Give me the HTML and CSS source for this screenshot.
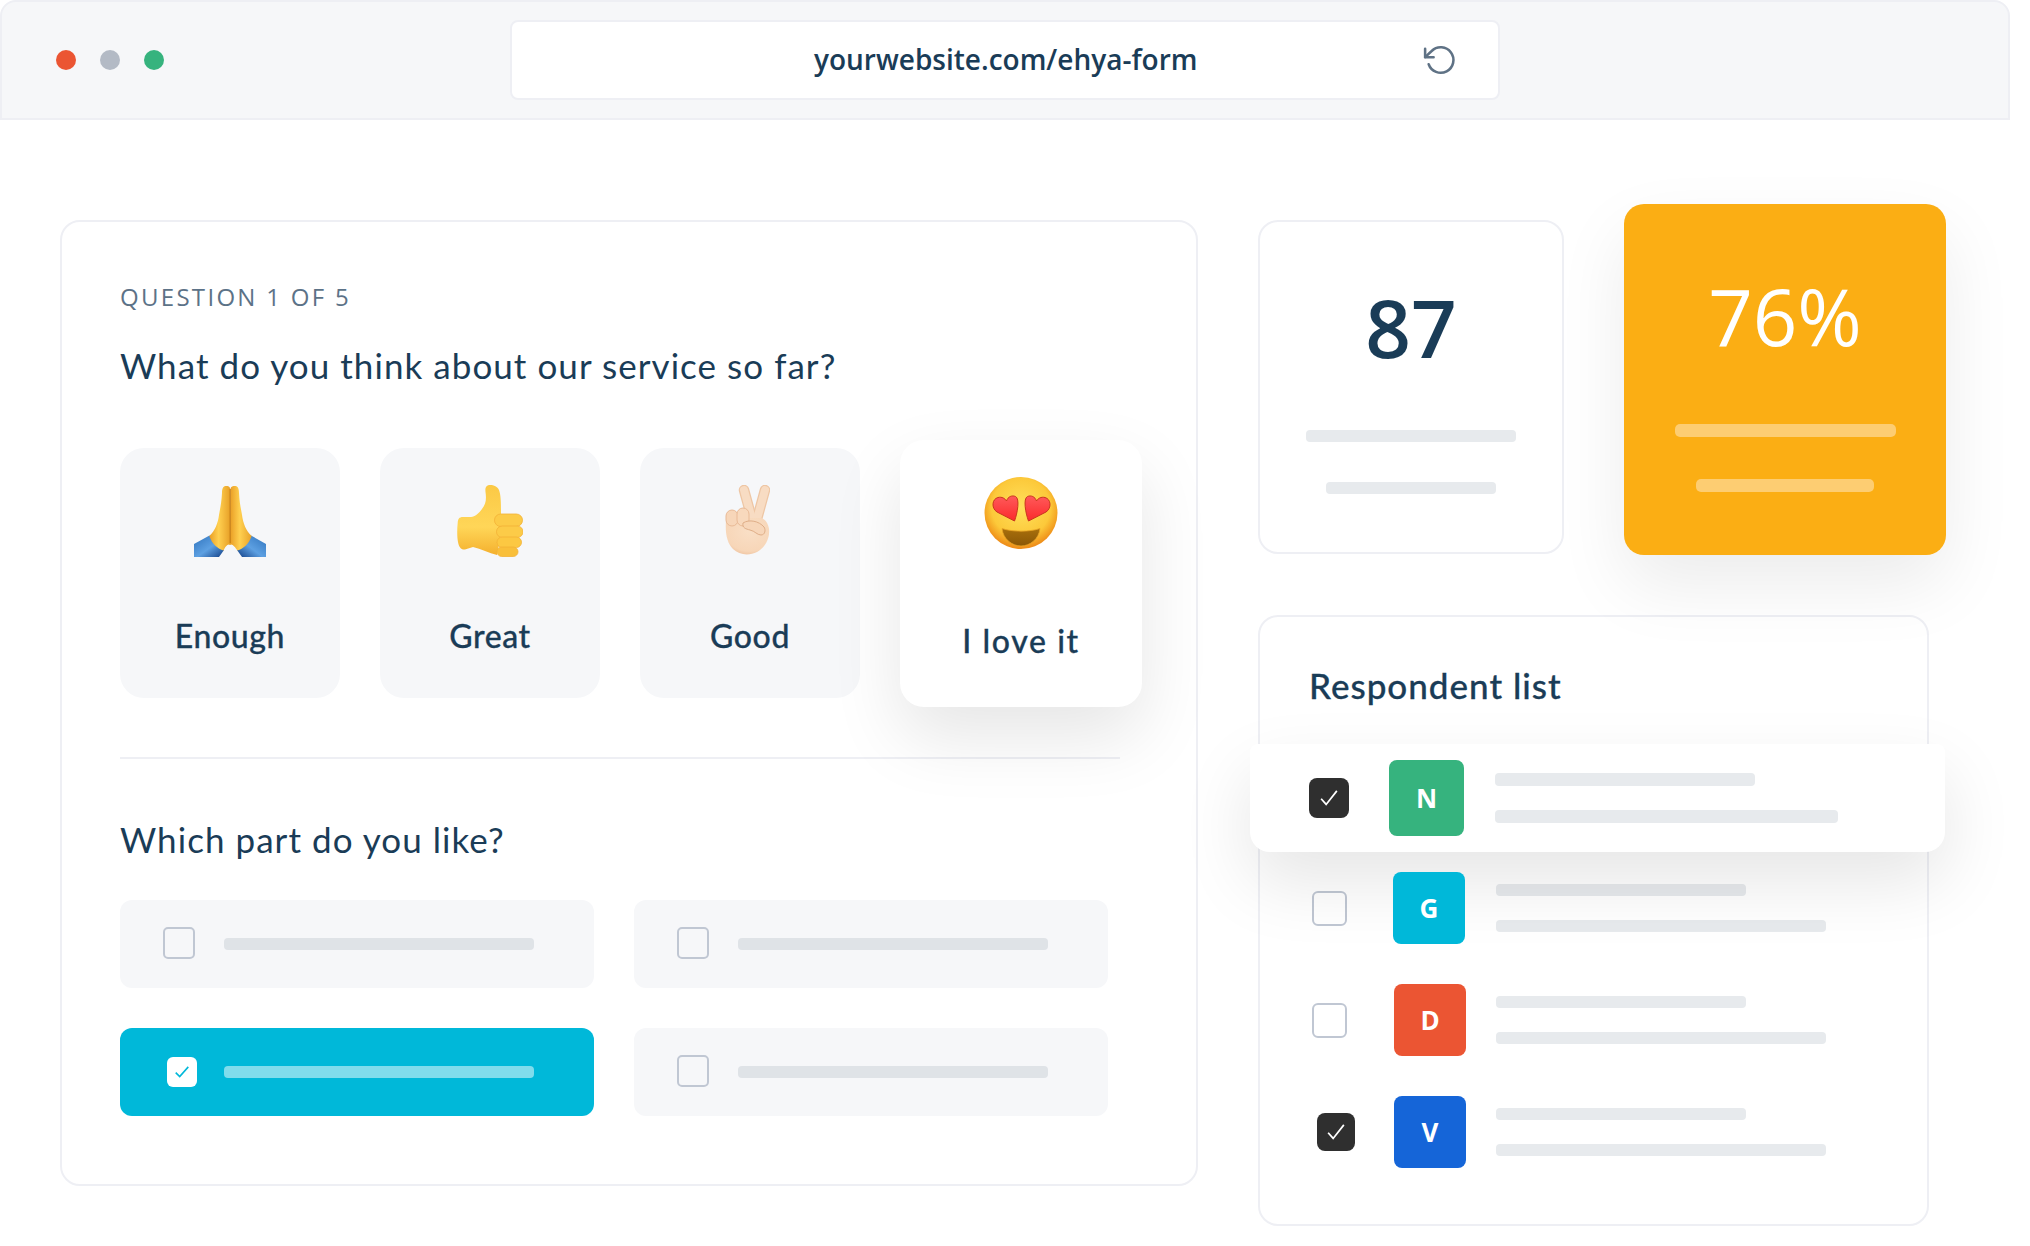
FILE: index.html
```html
<!DOCTYPE html>
<html lang="en">
<head>
<meta charset="utf-8">
<title>Ehya form</title>
<link rel="stylesheet" href="styles.css">
</head>
<body>
<div class="page">
  <header class="browser">
    <div class="dots"><span class="dot dot-red"></span><span class="dot dot-grey"></span><span class="dot dot-green"></span></div>
    <div class="address">
      <span class="url">yourwebsite.com/ehya-form</span>
      <svg class="reload" viewBox="0 0 24 24" fill="none" stroke="#5f7285" stroke-width="1.8" stroke-linecap="round" stroke-linejoin="round"><polyline points="1.5 4 1.5 10 7.5 10"/><path d="M4 15a9 9 0 1 0 2.13-9.36L1.5 10"/></svg>
    </div>
  </header>
  <main class="content">
    <section class="card form-card">
      <p class="eyebrow">QUESTION 1 OF 5</p>
      <h2 class="question">What do you think about our service so far?</h2>
      <div class="tiles">
        <div class="tile">
          <svg class="emoji emoji-pray" viewBox="0 0 72 72">
            <defs>
              <linearGradient id="sleeve" x1="0" y1="0" x2="1" y2="1"><stop offset="0" stop-color="#2f73bd"/><stop offset=".55" stop-color="#5da0e2"/><stop offset="1" stop-color="#123f86"/></linearGradient>
              <linearGradient id="sleeve2" x1="1" y1="0" x2="0" y2="1"><stop offset="0" stop-color="#2f73bd"/><stop offset=".55" stop-color="#5da0e2"/><stop offset="1" stop-color="#123f86"/></linearGradient>
              <linearGradient id="hand" x1="0" y1="0" x2="1" y2="0"><stop offset="0" stop-color="#e99d24"/><stop offset=".45" stop-color="#ffd050"/><stop offset="1" stop-color="#e8a128"/></linearGradient>
            </defs>
            <path d="M0 59 L15.5 50.5 L30 65 L25 72 H0Z" fill="url(#sleeve)"/>
            <path d="M72 59 L57 50.5 L43 65 L48 72 H72Z" fill="url(#sleeve2)"/>
            <path d="M36 60 C34 58 31 62 29.5 65.5 C24 64 18 59 15.3 51 C21 46 24 38 25 30 C26 24 27.5 18 28 8 C28 2 30 1 32 1 C34 1 36 1.500 36 3.500 Z" fill="url(#hand)"/>
            <path d="M36 60 C38 58 41 62 43.5 65.5 C49 64 55 59 57.700 51 C52 46 49 38 48 30 C47 24 45.500 18 45 8 C45 2 43 1 41 1 C39 1 37 1.500 36.500 3.500 Z" fill="url(#hand)"/>
            <path d="M36.200 4 V58" stroke="#c77f16" stroke-width="1.200"/>
          </svg>
          <span class="tile-label">Enough</span>
        </div>
        <div class="tile">
          <svg class="emoji emoji-thumb" viewBox="0 0 66 72">
            <defs>
              <linearGradient id="thumb" x1="0" y1="0" x2="0" y2="1"><stop offset="0" stop-color="#fbc945"/><stop offset=".6" stop-color="#ffd658"/><stop offset="1" stop-color="#f4b02e"/></linearGradient>
            </defs>
            <path d="M33 0 C29 0 28 3 28.500 7 C29.500 14 29 19 25 24 C22 28 18 32 14 32 L6 32 C2 32 1 34 .7 38 C0 44 0 52 1 57 C2 62 4 65 8 64.500 L16 62 C24 64 32 68 40 70 L44 50 L44 27 C44 20 44 10 42 5 C40.500 1.500 37 0 33 0Z" fill="url(#thumb)"/>
            <rect x="37.500" y="29" width="28" height="12.500" rx="6.200" fill="#fccb48" stroke="#f2b136" stroke-width=".8"/>
            <rect x="39.500" y="41" width="26.500" height="11.500" rx="5.700" fill="#fccb48" stroke="#f2b136" stroke-width=".8"/>
            <rect x="40" y="52" width="24.500" height="10.500" rx="5.200" fill="#fcc842" stroke="#f2b136" stroke-width=".8"/>
            <rect x="40" y="62" width="21" height="9.500" rx="4.700" fill="#f9bf3a" stroke="#f2b136" stroke-width=".8"/>
          </svg>
          <span class="tile-label">Great</span>
        </div>
        <div class="tile">
          <svg class="emoji emoji-peace" viewBox="0 0 45 70">
            <defs>
              <radialGradient id="skin" cx=".55" cy=".35" r=".75"><stop offset="0" stop-color="#f9dfc6"/><stop offset=".75" stop-color="#f7d6b8"/><stop offset="1" stop-color="#ebba94"/></radialGradient>
            </defs>
            <path d="M19 5 L27 34" stroke="#eec6a4" stroke-width="10.500" stroke-linecap="round"/>
            <path d="M40 5 L32 34" stroke="#eec6a4" stroke-width="10.500" stroke-linecap="round"/>
            <path d="M19 5 L27 34" stroke="#f8dcc3" stroke-width="8" stroke-linecap="round"/>
            <path d="M40 5 L32 34" stroke="#f8dcc3" stroke-width="8" stroke-linecap="round"/>
            <path d="M1 36 C0 48 2 58 8 64 C14 70 24 71 32 67 C41 62 45 52 44 44 C43 38 40 34 36 33 L16 33 Z" fill="url(#skin)"/>
            <rect x="1" y="25" width="12" height="16" rx="6" fill="#f7d6b9" stroke="#e9ba96"/>
            <rect x="12" y="23" width="12" height="18" rx="6" fill="#f8d9bd" stroke="#e9ba96"/>
            <path d="M18 38 C24 34 34 36 39 42 C41 45 40 50 36 50 C32 50 30 46 25 45 C21 44 17 43 18 38Z" fill="#f7d6b9" stroke="#dfae88" stroke-width="1"/>
          </svg>
          <span class="tile-label">Good</span>
        </div>
        <div class="tile tile-active">
          <svg class="emoji emoji-love" viewBox="0 0 74 72">
            <defs>
              <radialGradient id="face" cx=".5" cy=".42" r=".56"><stop offset="0" stop-color="#ffe05c"/><stop offset=".72" stop-color="#fcc93a"/><stop offset=".94" stop-color="#f29c1f"/><stop offset="1" stop-color="#ee8f1b"/></radialGradient>
              <linearGradient id="heart" x1="0" y1="0" x2="0" y2="1"><stop offset="0" stop-color="#ff5a5a"/><stop offset="1" stop-color="#fb2a2c"/></linearGradient>
              <linearGradient id="mouth" x1="0" y1="0" x2="0" y2="1"><stop offset="0" stop-color="#a86f0c"/><stop offset="1" stop-color="#8a5706"/></linearGradient>
            </defs>
            <ellipse cx="37" cy="36" rx="36.500" ry="36" fill="url(#face)"/>
            <path d="M18 51.500 C28 55 46 55 56 51.500 C55 62 46 69 37 69 C28 69 19 62 18 51.500Z" fill="url(#mouth)" stroke="#e8a325" stroke-width=".8"/>
            <path d="M30.500 44 L13 35 C7 31 8 22 14 20.500 C18 19.500 21 21.500 22.500 24 C24 19.500 28 18 31.500 19.500 C36 21.500 33.500 36 30.500 44Z" fill="url(#heart)" stroke="#c9351e" stroke-width="1"/>
            <path d="M44.500 44 L62 35 C68 31 67 22 61 20.500 C57 19.500 54 21.500 52.500 24 C51 19.500 47 18 43.500 19.500 C39 21.500 41.500 36 44.500 44Z" fill="url(#heart)" stroke="#c9351e" stroke-width="1"/>
          </svg>
          <span class="tile-label">I love it</span>
        </div>
      </div>
      <hr class="divider">
      <h2 class="question question-two">Which part do you like?</h2>
      <div class="options">
        <div class="option"><span class="box"></span><span class="option-bar"></span></div>
        <div class="option"><span class="box"></span><span class="option-bar"></span></div>
        <div class="option option-on">
          <span class="box box-on"><svg viewBox="0 0 14 14" fill="none" stroke="#00b8d9" stroke-width="1.400"><path d="M1.500 7.500 L5 11 L12.500 2.500"/></svg></span>
          <span class="option-bar"></span>
        </div>
        <div class="option"><span class="box"></span><span class="option-bar"></span></div>
      </div>
    </section>
    <aside class="side">
      <div class="stats">
        <div class="card stat">
          <div class="stat-value">87</div>
          <span class="stat-bar stat-bar-a"></span>
          <span class="stat-bar stat-bar-b"></span>
        </div>
        <div class="stat-gold">
          <div class="gold-value">76%</div>
          <span class="gold-bar gold-bar-a"></span>
          <span class="gold-bar gold-bar-b"></span>
        </div>
      </div>
      <section class="card list-card">
        <h3 class="list-title">Respondent list</h3>
        <div class="person person-top">
          <span class="tick tick-top"><svg viewBox="0 0 14 14" fill="none" stroke="#fff" stroke-width="1.200"><path d="M1.500 7.500 L5 11.500 L12.500 2"/></svg></span>
          <span class="avatar avatar-top avatar-n">N</span>
          <div class="lines lines-top"><span class="line line-a"></span><span class="line line-b"></span></div>
        </div>
        <div class="person">
          <span class="box list-box"></span>
          <span class="avatar avatar-g">G</span>
          <div class="lines"><span class="line line-a"></span><span class="line line-b"></span></div>
        </div>
        <div class="person">
          <span class="box list-box"></span>
          <span class="avatar avatar-d">D</span>
          <div class="lines lines-tight"><span class="line line-a"></span><span class="line line-b"></span></div>
        </div>
        <div class="person">
          <span class="tick tick-last"><svg viewBox="0 0 14 14" fill="none" stroke="#fff" stroke-width="1.200"><path d="M1.500 7.500 L5 11.500 L12.500 2"/></svg></span>
          <span class="avatar avatar-v">V</span>
          <div class="lines lines-tight"><span class="line line-a"></span><span class="line line-b"></span></div>
        </div>
      </section>
    </aside>
  </main>
</div>
</body>
</html>
```
FILE: styles.css
```css
* { box-sizing: border-box; }
html, body { margin: 0; padding: 0; background: #fff; }
.page { width: 2030px; height: 1246px; overflow: hidden; background: #fff; color: #1a3c57; font-family: "Lato", "Open Sans", sans-serif; }

.browser { width: 2010px; height: 120px; display: flex; align-items: center; padding-left: 54px; background: #f6f7f9; border: 2px solid #eeeff4; border-radius: 16px 16px 0 0; }
.dots { display: flex; gap: 24px; width: 454px; flex: none; }
.dot { width: 20px; height: 20px; border-radius: 50%; }
.dot-red { background: #eb5533; }
.dot-grey { background: #b3bac5; }
.dot-green { background: #36b37e; }
.address { width: 990px; height: 80px; flex: none; display: flex; align-items: center; padding-left: 302px; background: #fff; border: 2px solid #eeeff4; border-radius: 8px; }
.url { font-family: "Open Sans", sans-serif; font-size: 28px; font-weight: 600; white-space: nowrap; width: 609px; margin-top: -2px; }
.reload { width: 34px; height: 34px; flex: none; }

.content { display: flex; align-items: flex-start; padding: 84px 0 0 60px; }
.card { background: #fff; border: 2px solid #eeeff4; border-radius: 20px; }
.form-card { width: 1138px; height: 966px; margin-top: 16px; padding: 59px 0 0 58px; }
.eyebrow { margin: 0; font-family: "Open Sans", sans-serif; font-size: 24px; line-height: 32px; font-weight: 500; letter-spacing: 2.3px; color: #5c7287; }
.question { margin: 30px 0 0; font-size: 35px; font-weight: 400; line-height: 44px; letter-spacing: 1.05px; color: #1a3c57; }
.tiles { display: flex; margin-top: 61px; align-items: flex-start; }
.tile { width: 220px; height: 250px; margin-right: 40px; flex: none; display: flex; flex-direction: column; align-items: center; background: #f6f7f9; border-radius: 24px; padding-top: 37px; }
.emoji { display: block; flex: none; height: 72px; width: 72px; }
.emoji-thumb { width: 66px; }
.emoji-peace { width: 45px; height: 70px; margin: 0 5px 2px 0; }
.emoji-love { width: 74px; }
.tile-label { margin-top: 57px; font-size: 32px; line-height: 44px; font-weight: 500; letter-spacing: .6px; -webkit-text-stroke: .3px #1a3c57; }
.tile-active { width: 242px; height: 267px; margin: -8px 0 0 0; background: #fff; box-shadow: 0 30px 70px rgba(0, 0, 0, .1); }
.tile-active .tile-label { margin-top: 70px; letter-spacing: 1.6px; }
.divider { width: 1000px; height: 2px; margin: 50px 0 0; border: 0; background: #eeeff4; }
.question-two { margin-top: 58px; }
.options { display: grid; grid-template-columns: 474px 474px; column-gap: 40px; row-gap: 40px; margin-top: 39px; }
.option { height: 88px; display: flex; align-items: center; background: #f6f7f9; border-radius: 12px; padding-left: 43px; }
.box { display: block; flex: none; width: 32px; height: 32px; border: 2px solid #c0c7d3; border-radius: 5px; margin-top: -2px; }
.option-bar { display: block; width: 310px; height: 12px; margin-left: 29px; background: #dfe3e7; border-radius: 4px; }
.option-on { background: #00b8d9; }
.option-on .option-bar { margin-left: 27px; background: #80dcec; }
.box-on { width: 30px; height: 30px; margin: 0 0 0 4px; border: 0; background: #fff; border-radius: 6px; display: flex; align-items: center; justify-content: center; }
.box-on svg { width: 16px; height: 16px; }

.side { margin-left: 60px; flex: none; width: 688px; }
.stats { display: flex; align-items: flex-start; }
.stat { width: 306px; height: 334px; margin-top: 16px; display: flex; flex-direction: column; align-items: center; padding-top: 55px; }
.stat-value { font-family: "Open Sans", sans-serif; font-size: 80px; line-height: 100px; font-weight: 600; color: #1a3c57; }
.stat-bar { display: block; height: 12px; background: #e7eaed; border-radius: 4px; }
.stat-bar-a { width: 210px; margin-top: 53px; }
.stat-bar-b { width: 170px; margin-top: 40px; }
.stat-gold { width: 322px; height: 351px; margin-left: 60px; display: flex; flex-direction: column; align-items: center; padding-top: 62px; background: #fbae14; border-radius: 20px; box-shadow: 0 30px 70px rgba(0, 0, 0, .08); }
.gold-value { font-family: "Open Sans", sans-serif; font-size: 78px; line-height: 100px; font-weight: 400; color: #fff; }
.gold-bar { display: block; height: 13px; background: #fdcd72; border-radius: 5px; }
.gold-bar-a { width: 221px; margin-top: 58px; }
.gold-bar-b { width: 178px; margin-top: 42px; }

.list-card { width: 671px; height: 611px; margin-top: 60px; padding-top: 46px; }
.list-title { margin: 0 0 0 49px; font-size: 35px; font-weight: 500; line-height: 44px; letter-spacing: 1px; color: #1a3c57; height: 81px; -webkit-text-stroke: .3px #1a3c57; }
.person { display: flex; align-items: center; height: 72px; margin-bottom: 40px; padding-left: 52px; }
.person-top { height: 108px; margin: 0 -18px 20px -10px; padding-left: 59px; background: #fff; border-radius: 8px 8px 20px 20px; box-shadow: 0 30px 70px rgba(0, 0, 0, .1); position: relative; }
.list-box { width: 35px; height: 35px; border-radius: 6px; margin: 0 46px 0 0; }
.tick { flex: none; display: flex; align-items: center; justify-content: center; background: #2f2f2f; border-radius: 8px; }
.tick svg { width: 20px; height: 20px; }
.tick-top { width: 40px; height: 40px; margin-right: 40px; }
.tick-last { width: 38px; height: 38px; margin: 0 38px 0 5px; }
.avatar { flex: none; width: 72px; height: 72px; display: flex; align-items: center; justify-content: center; border-radius: 8px; color: #fff; font-family: "Open Sans", sans-serif; font-size: 26px; font-weight: 700; }
.avatar-top { width: 75px; height: 76px; }
.avatar-n { background: #36b37e; }
.avatar-g { background: #00b8d9; position: relative; }
.avatar-d { background: #eb5533; margin-left: 1px; }
.avatar-v { background: #1565d8; margin-left: 1px; }
.lines { margin-left: 31px; display: flex; flex-direction: column; gap: 24px; }
.lines-tight { margin-left: 30px; }
.line { display: block; height: 12px; background: #e7eaed; border-radius: 4px; }
.line-a { width: 250px; }
.line-b { width: 330px; }
.lines-top .line { height: 13px; }
.lines-top .line-a { width: 260px; }
.lines-top .line-b { width: 343px; }
```
